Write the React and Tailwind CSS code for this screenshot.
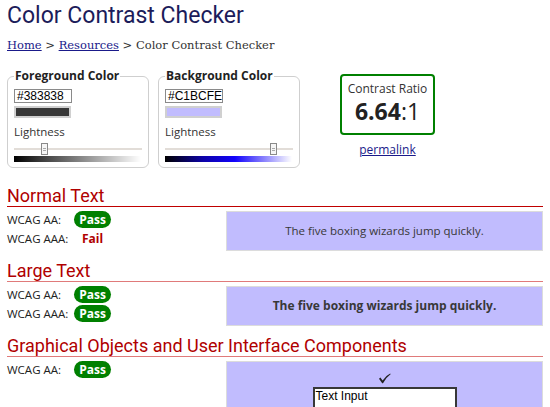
import React from "react";

function Pill({ pass }) {
  return pass ? (
    <span className="inline-flex h-[17px] w-[37px] items-center justify-center rounded-full bg-[#008000] text-[12px] font-bold leading-none text-white">
      Pass
    </span>
  ) : (
    <span className="inline-flex h-[17px] w-[37px] items-center justify-center text-[12px] font-bold leading-none text-[#b00000]">
      Fail
    </span>
  );
}

function Row({ label, pass }) {
  return (
    <div className="flex h-[17px] items-center">
      <span className="w-[67px] text-[11.5px] leading-[16px] text-[#222]">{label}</span>
      <Pill pass={pass} />
    </div>
  );
}

function Heading({ children, line }) {
  return (
    <h2
      className={
        "h-[21px] border-b font-['Roboto'] text-[18px] leading-[20px] text-[#b00000] " +
        (line === "dark" ? "border-[#c00000]" : "border-[#e07a7a]")
      }
    >
      {children}
    </h2>
  );
}

function Slider({ pos, gradient }) {
  return (
    <>
      <div className="relative mt-[3px] h-[12px]">
        <div className="absolute left-0 right-0 top-[5px] h-[2px] bg-[#e2ddd8]" />
        <div
          className="absolute top-0 flex h-[12px] w-[7px] flex-col items-center justify-center gap-[1px] border border-[#8a8a8a] bg-[#f6f6f6]"
          style={{ left: pos }}
        >
          <div className="h-[1px] w-[3px] bg-[#aaa]" />
          <div className="h-[1px] w-[3px] bg-[#aaa]" />
        </div>
      </div>
      <div className="mt-[1px] h-[6px] w-[127px]" style={{ background: gradient }} />
    </>
  );
}

function ColorBox({ title, value, color, pos, gradient }) {
  return (
    <fieldset className="w-[142px] rounded-[6px] border border-[#cfcfcf] px-[6px] pb-[5px]">
      <legend className="px-[1px] text-[12px] font-bold leading-[16px] text-[#222]">{title}</legend>
      <div className="mt-[5px] flex h-[14px] w-[58px] items-center border border-[#8a8a8a] bg-white px-[2px] font-['Liberation_Sans'] text-[12px] leading-none text-black">
        {value}
      </div>
      <div className="mt-[3px] h-[12px] w-[57px] border-2 border-[#d0d0d0]" style={{ background: color }} />
      <div className="mt-[6px] text-[11.5px] leading-[16px] text-[#333]">Lightness</div>
      <Slider pos={pos} gradient={gradient} />
    </fieldset>
  );
}

export default function App() {
  return (
    <div className="h-[407px] w-[550px] overflow-hidden bg-white px-[7px] font-['Open_Sans',sans-serif] text-[#222]">
      <h1 className="pt-[2px] font-['Roboto'] text-[23px] font-normal leading-[28px] text-[#1c1c5a]">
        Color Contrast Checker
      </h1>
      <nav className="mt-[7px] font-['DejaVu_Serif',serif] text-[11.5px] leading-[16px] text-[#333]">
        <a className="text-[#1a1a8a] underline">Home</a> &gt;{" "}
        <a className="text-[#1a1a8a] underline">Resources</a> &gt; Color Contrast Checker
      </nav>

      <div className="mt-[15px] flex items-start">
        <ColorBox
          title="Foreground Color"
          value="#383838"
          color="#383838"
          pos={27}
          gradient="linear-gradient(to right, #000000, #383838 20%, #808080 50%, #ffffff)"
        />
        <div className="ml-[9px]">
          <ColorBox
            title="Background Color"
            value="#C1BCFE"
            color="#C1BCFE"
            pos={105}
            gradient="linear-gradient(to right, #000000, #0c02a8 30%, #1203fc 55%, #8a82fd 78%, #ffffff)"
          />
        </div>
        <div className="ml-[40px] mt-[6px] flex flex-col items-center">
          <div className="flex h-[61px] w-[95px] flex-col items-center rounded-[4px] border-2 border-[#008000] pt-[5px]">
            <div className="text-[12px] leading-[16px] text-[#333]">Contrast Ratio</div>
            <div className="mt-[1px] text-[23px] leading-[26px] text-[#222]">
              <span className="font-bold">6.64</span>:1
            </div>
          </div>
          <a className="mt-[7px] text-[12px] leading-[16px] text-[#1a1a8a] underline">permalink</a>
        </div>
      </div>

      <section className="mt-[18px]">
        <Heading line="dark">Normal Text</Heading>
        <div className="mt-[4px] flex">
          <div className="flex w-[219px] flex-col gap-[2px]">
            <Row label="WCAG AA:" pass />
            <Row label="WCAG AAA:" pass={false} />
          </div>
          <div className="flex h-[40px] flex-1 items-center justify-center border border-[#dcdcdc] bg-[#C1BCFE] text-[11.5px] text-[#383838]">
            The five boxing wizards jump quickly.
          </div>
        </div>
      </section>

      <section className="mt-[10px]">
        <Heading>Large Text</Heading>
        <div className="mt-[4px] flex">
          <div className="flex w-[219px] flex-col gap-[2px]">
            <Row label="WCAG AA:" pass />
            <Row label="WCAG AAA:" pass />
          </div>
          <div className="flex h-[40px] flex-1 items-center justify-center border border-[#dcdcdc] bg-[#C1BCFE] text-[12px] font-bold text-[#383838]">
            The five boxing wizards jump quickly.
          </div>
        </div>
      </section>

      <section className="mt-[10px]">
        <Heading>Graphical Objects and User Interface Components</Heading>
        <div className="mt-[4px] flex">
          <div className="flex w-[219px] flex-col">
            <Row label="WCAG AA:" pass />
          </div>
          <div className="flex h-[60px] flex-1 flex-col items-center border border-[#dcdcdc] bg-[#C1BCFE] pt-[11px]">
            <svg width="13" height="11" viewBox="0 0 13 11" className="block">
              <path
                d="M1 5.8 L2.4 4.6 L4.6 7.4 Q7.5 3 12.2 0.6 L12.6 1.2 Q8.2 4.2 5 10.2 L4.2 10.2 Z"
                fill="#222"
              />
            </svg>
            <div className="mt-[3px] flex h-[22px] w-[144px] items-start border-2 border-[#383838] bg-white px-[1px] font-['Liberation_Sans'] text-[12px] leading-[15px] text-black">
              Text Input
            </div>
          </div>
        </div>
      </section>
    </div>
  );
}
